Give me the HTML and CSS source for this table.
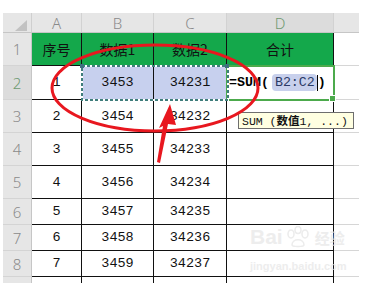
FILE: index.html
```html
<!DOCTYPE html>
<html>
<head>
<meta charset="utf-8">
<link rel="stylesheet" href="styles.css">
</head>
<body>
<div class="sheet">
  <div class="grid">
    <div class="corner"><svg width="29" height="20" viewBox="0 0 29 20"><polygon points="24,7 24,18 12,18" fill="#c2c2c2"/></svg></div>
    <div class="ch">A</div><div class="ch">B</div><div class="ch">C</div><div class="ch sel">D</div><div class="ch last"></div>

    <div class="rh">1</div><div class="c g">序号</div><div class="c g">数据1</div><div class="c g">数据2</div><div class="c g">合计</div><div class="e"></div>

    <div class="rh sel">2</div><div class="c n">1</div><div class="c n b">3453</div><div class="c n b">34231</div>
    <div class="c active"><span class="fx">=SUM(</span><span class="ref">B2:C2</span><span class="caret"></span><span class="fx">)</span></div><div class="e"></div>

    <div class="rh">3</div><div class="c n">2</div><div class="c n">3454</div><div class="c n">34232</div><div class="c"></div><div class="e"></div>
    <div class="rh">4</div><div class="c n">3</div><div class="c n">3455</div><div class="c n">34233</div><div class="c"></div><div class="e"></div>
    <div class="rh">5</div><div class="c n">4</div><div class="c n">3456</div><div class="c n">34234</div><div class="c"></div><div class="e"></div>
    <div class="rh">6</div><div class="c n">5</div><div class="c n">3457</div><div class="c n">34235</div><div class="c"></div><div class="e"></div>
    <div class="rh">7</div><div class="c n">6</div><div class="c n">3458</div><div class="c n">34236</div><div class="c"></div><div class="e"></div>
    <div class="rh">8</div><div class="c n">7</div><div class="c n">3459</div><div class="c n">34237</div><div class="c"></div><div class="e"></div>
    <div class="rh"></div><div class="c n"></div><div class="c n"></div><div class="c n"></div><div class="c"></div><div class="e"></div>
  </div>

  <svg class="marquee" width="150" height="38" viewBox="0 0 150 38">
    <rect x="2" y="2" width="146" height="34" fill="none" stroke="#ffffff" stroke-width="2"/>
    <rect x="2" y="2" width="146" height="34" fill="none" stroke="#3f7d7b" stroke-width="2" stroke-dasharray="3 2"/>
    <rect x="0" y="0" width="4" height="4" fill="#3f6f80"/>
    <rect x="145" y="0" width="4" height="4" fill="#3f6f80"/>
  </svg>

  <div class="tip">SUM (<b>数值</b>1, ...)</div>

  <div class="wm">
    <div class="wm-top"><span>Bai</span><svg width="26" height="22" viewBox="0 0 26 22"><g fill="none" stroke="#e4e4e4" stroke-width="1.5"><ellipse cx="6" cy="8" rx="3" ry="4"/><ellipse cx="13" cy="4" rx="3" ry="3.5"/><ellipse cx="20" cy="8" rx="3" ry="4"/><path d="M7 19 C7 12 19 12 19 19 C19 21 7 21 7 19Z"/></g></svg><span class="cjk">经验</span></div>
    <div class="wm-url">jingyan.baidu.com</div>
  </div>

  <svg class="ink" width="369" height="283" viewBox="0 0 369 283">
    <ellipse cx="155" cy="88" rx="103" ry="43" fill="none" stroke="#e8171f" stroke-width="3"/>
    <polygon points="170,104 176,125 168,124 160,163 157,162 163,126 159,128" fill="#e8171f"/>
  </svg>
</div>
</body>
</html>
```

FILE: styles.css
```css
* { box-sizing: border-box; }
html, body { margin: 0; padding: 0; background: #ffffff; }
.sheet {
  position: relative;
  width: 369px;
  height: 283px;
  overflow: hidden;
  padding: 13px 0 0 3px;
}
.grid {
  display: grid;
  grid-template-columns: 29px 50px 72px 73px 107px 25px;
  grid-template-rows: 20px 33px 34px 33px 33px 33px 26px 26px 26px 26px;
}
.corner {
  background: #e6e6e6;
  border-right: 1px solid #cfcfcf;
  border-bottom: 1px solid #c6c6c6;
}
.corner svg { display: block; }
.ch {
  background: #e6e6e6;
  border-right: 1px solid #d2d2d2;
  border-bottom: 1px solid #c6c6c6;
  color: #8a8a8a;
  font-family: "Noto Sans", "DejaVu Sans", sans-serif;
  font-size: 15px;
  font-weight: 300;
  display: flex;
  align-items: center;
  justify-content: center;
}
.ch.sel { background: #dcdcdc; color: #6f9a72; }
.ch.last { border-right: none; }
.rh {
  background: #e6e6e6;
  border-right: 1px solid #c6c6c6;
  border-bottom: 1px solid #d4d4d4;
  color: #8a8a8a;
  font-family: "Noto Sans", "DejaVu Sans", sans-serif;
  font-size: 15px;
  font-weight: 300;
  display: flex;
  align-items: center;
  justify-content: center;
}
.rh.sel { background: #dcdcdc; color: #6f9a72; }
.c {
  border-right: 1px solid #111;
  border-bottom: 1px solid #111;
  display: flex;
  align-items: center;
  justify-content: center;
  color: #111;
  background: #ffffff;
}
.g {
  background: #14a84b;
  font-family: "Noto Sans CJK SC", "Noto Sans", sans-serif;
  font-size: 14px;
  color: #111;
}
.n {
  font-family: "Liberation Mono", "DejaVu Sans Mono", monospace;
  font-size: 13.5px;
}
.b { background: #c7d0ee; }
.e { border-bottom: 1px solid #d6d6d6; }
.active {
  position: relative;
  justify-content: flex-start;
  padding-left: 2px;
  outline: 2px solid #4caa4c;
  outline-offset: -1px;
  font-family: "Liberation Mono", "DejaVu Sans Mono", monospace;
  font-size: 13.3px;
}
.active::after {
  content: "";
  position: absolute;
  right: -3px;
  bottom: -3px;
  width: 5px;
  height: 5px;
  background: #4caa4c;
  border: 1px solid #ffffff;
}
.fx { font-weight: bold; color: #000; }
.ref {
  background: #c8d0ec;
  color: #2b3b66;
  border-radius: 4px;
  padding: 1px 2px 1px 3px;
  margin-left: 3px;
}
.caret {
  display: inline-block;
  width: 1px;
  height: 16px;
  background: #000;
}
.marquee {
  position: absolute;
  left: 80px;
  top: 64px;
}
.tip {
  position: absolute;
  left: 238px;
  top: 112px;
  width: 116px;
  height: 17px;
  background: #ffffe1;
  border: 1px solid #6e6e6e;
  font-family: "Liberation Mono", "DejaVu Sans Mono", "Noto Sans CJK SC", monospace;
  font-size: 11.5px;
  line-height: 15px;
  padding-left: 3px;
  color: #111;
  white-space: nowrap;
}
.tip b { font-family: "Noto Sans CJK SC", sans-serif; font-weight: bold; font-size: 11.5px; }
.wm {
  position: absolute;
  left: 250px;
  top: 226px;
  color: #e6e6e6;
  font-family: "Liberation Sans", Arial, sans-serif;
}
.wm-top { display: flex; align-items: flex-end; gap: 2px; font-size: 21px; font-weight: bold; line-height: 22px; opacity: 0.7; }
.wm-top .cjk { font-family: "Noto Sans CJK SC", sans-serif; font-size: 15px; line-height: 20px; margin-left: 2px; }
.wm-url { font-size: 11px; font-weight: bold; margin-top: 12px; opacity: 0.7; }
.ink {
  position: absolute;
  left: 0;
  top: 0;
  pointer-events: none;
}
```
